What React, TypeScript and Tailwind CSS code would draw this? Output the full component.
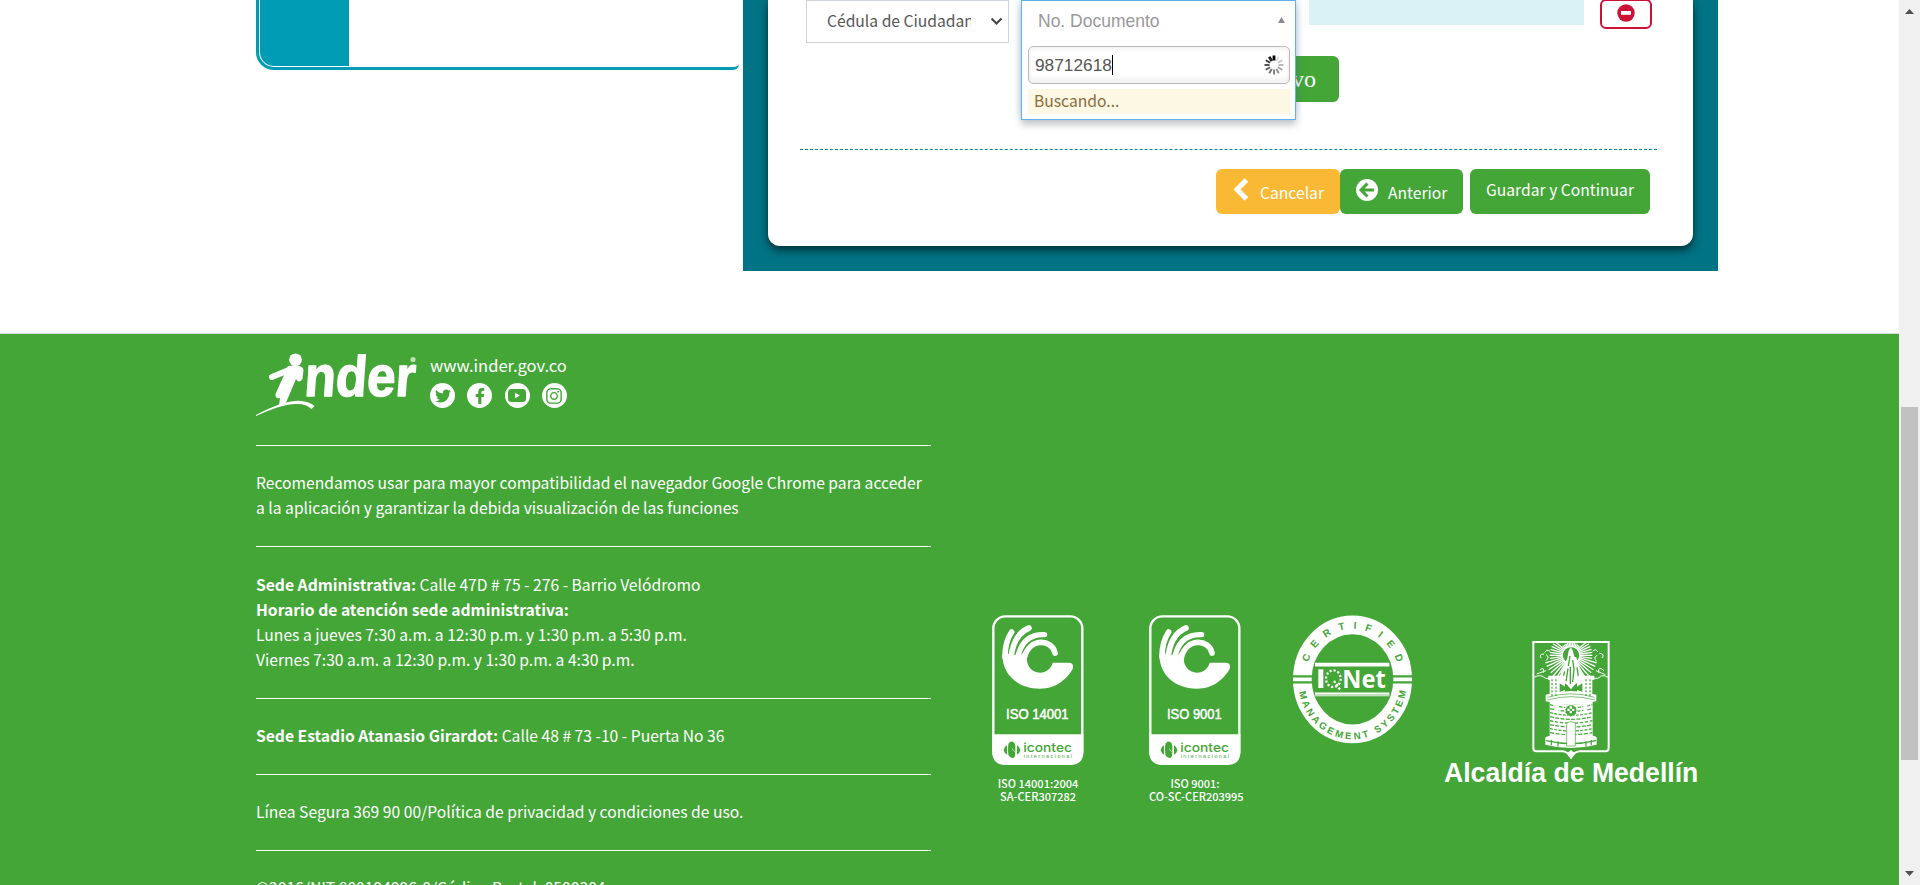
import type { ReactNode } from "react";
import { FaTwitter, FaFacebookF, FaInstagram } from "react-icons/fa";

const spokes = Array.from({ length: 12 }, (_, i) => i);
const rays = Array.from({ length: 44 }, (_, i) => i);

function Spinner() {
  return (
    <svg width="20" height="20" viewBox="-10 -10 20 20">
      {spokes.map((i) => (
        <line
          key={i}
          x1="0"
          y1="-4.500"
          x2="0"
          y2="-9.500"
          stroke="#000"
          strokeWidth={i === 0 || i === 11 ? 2.8 : 1.9}
          strokeOpacity={i === 0 ? 1 : 0.08 + (i / 12) * 0.85}
          transform={`rotate(${i * 30})`}
        />
      ))}
    </svg>
  );
}

function InderLogo() {
  return (
    <svg width="162" height="66" viewBox="0 0 162 66" fill="#fff">
      <circle cx="39.5" cy="6.8" r="6.4" />
      <path d="M16 24 L34 16.500" fill="none" stroke="#fff" strokeWidth="6" strokeLinecap="round" />
      <path d="M32 13 Q47 11 47.500 17 L46.500 26 Q43 31 40 26 L29 52 L23 53 L24 45 Q19 46 19.500 41 L28 22 Z" />
      <path d="M0 62 Q30 46 46 48 Q54 49 58.500 53 L55.500 56 Q50 51 42 51 Q28 50 0 63 Z" />
      <g transform="translate(46.5 43) skewX(-4)">
        <text
          x="1"
          y="0"
          fontFamily="Liberation Sans, sans-serif"
          fontWeight="700"
          fontSize="57"
          textLength="111"
          lengthAdjust="spacingAndGlyphs"
          stroke="#fff"
          strokeWidth="1.4"
          strokeLinejoin="round"
        >
          nder
        </text>
      </g>
      <circle cx="157" cy="6.500" r="2.600" fillOpacity="0.65" />
    </svg>
  );
}

function IcontecSeal({ label }: { label: string }) {
  return (
    <svg width="92" height="150" viewBox="0 0 276 450" fill="#fff">
      <rect x="4" y="4" width="267" height="442" rx="36" fill="none" stroke="#fff" strokeWidth="7" />
      <path d="M1 358 H274 V410 Q274 450 234 450 H41 Q1 450 1 410 Z" />
      <g fill="none" stroke="#fff" strokeLinecap="round">
        <path d="M59 51 Q39 80 39 125" strokeWidth="17" />
        <path d="M111 39 Q64 58 57 130" strokeWidth="17" />
        <path d="M158 59 Q88 56 76 135" strokeWidth="16" />
        <path d="M189 114 C180 72 112 66 96 130" strokeWidth="17" />
      </g>
      <path d="M31 118 C31 180 78 221 143 221 C195 221 226 190 242 162 Q247 144 231 143 L182 143 A39 39 0 0 1 106 125 L94 112 L78 130 L70 118 L58 130 L50 116 Z" />
      <text x="136" y="313" textAnchor="middle" fontFamily="Liberation Sans, sans-serif" fontSize="43" stroke="#fff" strokeWidth="1.500" textLength={label.length > 8 ? 188 : 164} lengthAdjust="spacingAndGlyphs">
        {label}
      </text>
      <g fill="#43a637">
        <path d="M49 386 Q55 378 63 380 Q70 385 70 392 V412 L60 400 V420 Q52 420 49 412 Z" />
        <path d="M49 391 L69 412 Q72 425 63 430 Q54 429 49 420 Z" />
        <path d="M45 391 V419 Q36 414 35 405 Q36 396 45 391Z M75 391 V419 Q84 414 85 405 Q84 396 75 391Z" />
        <text x="94" y="411" fontFamily="Inter, sans-serif" fontSize="38" fontWeight="500" textLength="146" lengthAdjust="spacingAndGlyphs">
          icontec
        </text>
        <text x="95" y="430" fontFamily="Liberation Sans, sans-serif" fontSize="16" textLength="145">
          internacional
        </text>
      </g>
    </svg>
  );
}

function IqNetSeal() {
  return (
    <svg width="119" height="129" viewBox="0 0 357 387" fill="#fff">
      <ellipse cx="178.5" cy="193" rx="150.5" ry="163.5" fill="none" stroke="#fff" strokeWidth="56" />
      <path d="M0 184 H357 M0 202 H357" stroke="#43a637" strokeWidth="7" />
      <rect x="66" y="140" width="223" height="106" fill="#43a637" />
      <path d="M66 149 H289 M66 238 H289" stroke="#fff" strokeWidth="11" />
      <path d="M66 240 H289" stroke="#43a637" strokeWidth="2" />
      <defs>
        <path id="seal-top" d="M37 193 A141.500 152 0 0 1 320 193" />
        <path id="seal-bottom" d="M16 201 A162.500 172 0 0 0 341 201" />
      </defs>
      <g fill="#43a637" fontFamily="Liberation Sans, sans-serif" fontWeight="700" fontSize="30">
        <text>
          <textPath href="#seal-top" startOffset="52" textLength="358">CERTIFIED</textPath>
        </text>
        <text fontSize="29">
          <textPath href="#seal-bottom" startOffset="30" textLength="468">MANAGEMENT SYSTEM</textPath>
        </text>
      </g>
      <rect x="76" y="163" width="15" height="56" />
      <text x="148" y="219" fontFamily="Noto Sans, sans-serif" fontWeight="700" fontSize="76" textLength="130" lengthAdjust="spacingAndGlyphs">
        Net
      </text>
      <ellipse cx="121" cy="191" rx="22" ry="25" fill="none" stroke="#fff" strokeWidth="7" strokeDasharray="6.500 5.800" />
      <path d="M123 198 L144 228" stroke="#fff" strokeWidth="7" strokeDasharray="7 5" />
    </svg>
  );
}

function MedellinLogo() {
  return (
    <svg width="256" height="146" viewBox="0 0 768 438" fill="#fff">
      <path d="M268 6 H494 V324 Q494 334 484 334 H406 Q390 336 381 351 Q372 336 356 334 H278 Q268 334 268 324 Z" fill="none" stroke="#fff" strokeWidth="6" />
      <path d="M381 330 Q385 336 396 338 L381 358 L366 338 Q377 336 381 330Z" />
      <g stroke="#fff" strokeWidth="4">
        {rays.map((i) => (
          <line
            key={i}
            x1="0"
            y1="-28"
            x2="0"
            y2={i < 6 || i > 38 ? -38 : i < 13 || i > 31 ? -64 : -80}
            transform={`translate(381 46) rotate(${(i * 360) / 44})`}
          />
        ))}
      </g>
      <circle cx="381" cy="46" r="27" fill="none" stroke="#fff" strokeWidth="5" />
      <path d="M381 22 L387 34 L391 50 L397 52 L404 76 L419 112 L408 126 L394 132 L381 148 L367 132 L352 126 L346 112 L359 78 L370 54 L374 32 Z" />
      <path d="M378 48 L373 78 M386 60 L390 88 L386 126 M372 86 L366 124 M362 94 L356 118 M399 82 L404 116 M379 80 L379 132" stroke="#43a637" strokeWidth="4" />
      <g fill="none" stroke="#fff" strokeWidth="3">
        <path d="M270 112 Q290 102 300 112 T332 104 M288 90 Q302 78 298 98 M278 102 L306 92 M291 54 Q284 42 300 42 M302 38 Q308 26 318 34 M306 62 Q318 50 306 44" />
        <path d="M492 112 Q474 102 466 112 T430 104 M480 92 Q462 76 464 98 M484 104 L456 92 M474 54 Q484 42 466 40 M462 36 Q454 24 446 34 M458 64 Q446 52 460 46" />
      </g>
      <rect x="317" y="112" width="46" height="58" />
      <rect x="399" y="112" width="46" height="58" />
      <path d="M313 107 H363 V120 H313Z M401 107 H451 V120 H401Z" />
      <path d="M347 130 L372 146 L347 156 Z M415 130 L390 146 L415 156 Z" fill="#43a637" />
      <path d="M305 164 Q381 142 457 164 V184 Q381 204 305 184 Z" />
      <path d="M310 172 Q381 151 452 172 M310 180 Q381 160 452 180" fill="none" stroke="#43a637" strokeWidth="2" />
      <path d="M317 184 Q381 204 446 184 V300 H317 Z" />
      <path d="M304 292 Q320 284 330 288 V298 H436 V288 Q448 284 458 292 V314 Q381 334 304 314 Z" />
      <g fill="none" stroke="#43a637" strokeWidth="3.600">
        <path d="M318 194 Q381 212 445 194" strokeDasharray="10 4" />
        <path d="M318 206 Q381 222 445 206" strokeDasharray="12 4" />
        <path d="M318 218 Q381 234 445 218" strokeDasharray="9 4" />
        <path d="M318 230 Q381 246 445 230" strokeDasharray="12 4" />
        <path d="M318 242 Q381 257 445 242" strokeDasharray="10 5" />
        <path d="M318 254 Q381 268 445 254" strokeDasharray="12 4" />
        <path d="M318 266 Q381 280 445 266" strokeDasharray="9 4" />
        <path d="M318 278 Q381 290 445 278" strokeDasharray="12 5" />
        <path d="M306 302 Q381 320 456 302" />
        <path d="M324 118 V168 M336 118 V168 M426 118 V168 M438 118 V168" strokeDasharray="6 5" />
        <path d="M322 300 V316 M342 304 V320 M426 304 V320 M442 300 V316" />
      </g>
      <path d="M368 318 V250 Q381 240 394 250 V318 Z" stroke="#43a637" strokeWidth="2" />
      <path d="M332 196 H344 V214 H332Z M418 196 H430 V214 H418Z" />
      <circle cx="381" cy="212" r="18" fill="#43a637" stroke="#fff" strokeWidth="4" strokeDasharray="7 3" />
      <path d="M370 206 H377 V213 H370Z M384 206 H391 V213 H384Z M377 213 H384 V220 H377Z M377 199 H384 V206 H377Z" />
      <text x="0" y="426" fontFamily="Liberation Sans, sans-serif" fontWeight="700" fontSize="83" textLength="763" lengthAdjust="spacingAndGlyphs">
        Alcaldía de Medellín
      </text>
    </svg>
  );
}

function Bubble({ children }: { children: ReactNode }) {
  return <a className="flex size-[25px] items-center justify-center rounded-full bg-white text-[#43a637]">{children}</a>;
}

function Rule() {
  return <hr className="mt-[26px] mb-[24px] border-t border-white/95" />;
}

function Registration() {
  return (
    <section className="flex h-[333px] shrink-0 items-start pl-[256px]">
      <aside className="mr-1 h-[70px] w-[483px] rounded-bl-[18px] rounded-br-[6px] border-b-[3px] border-l-[3px] border-[#009bb4] pb-px pl-px">
        <div className="h-full w-[89px] rounded-bl-[14px] bg-[#009bb4]" />
      </aside>
      <main className="h-[271px] w-[975px] bg-[#007384] px-[25px] pb-[25px]">
        <div className="h-[246px] rounded-b-[12px] bg-white pr-9 pl-8 shadow-[0_4px_8px_rgba(0,0,0,0.6)]">
          <div className="relative flex h-[150px] items-start border-b border-dashed border-[#008ba3] pl-1.5">
            <div className="flex h-[43px] w-[203px] items-center border border-[#cfd3dd] pr-[5px] pl-[20px] text-[#555]">
              <span className="-mt-px w-[144px] overflow-hidden whitespace-nowrap">Cédula de Ciudadano</span>
              <svg className="ml-auto" width="13" height="9" viewBox="0 0 13 9">
                <path d="M1.500 1.500 L6.500 6.500 L11.500 1.500" fill="none" stroke="#444" strokeWidth="2" />
              </svg>
            </div>
            <div className="relative z-10 ml-3 w-[275px] shadow-[0_-4px_8px_rgba(102,175,233,0.35)]">
              <div className="h-[120px] border border-[#66afe9] bg-white pr-[5px] pl-1.5 font-['Liberation_Sans',sans-serif] text-[17.5px] shadow-[0_5px_7px_rgba(0,0,0,0.22)]">
                <div className="flex h-[45px] items-start justify-between pr-[5px] pl-[10px] text-[#999]">
                  <span className="leading-[41px]">No. Documento</span>
                  <svg className="mt-4" width="7" height="6" viewBox="0 0 8 7">
                    <path d="M0 7 L4 0 L8 7Z" fill="#888" />
                  </svg>
                </div>
                <div className="flex h-[38px] items-center justify-between rounded-[5px] border border-[#bbb] pr-[5px] pl-1.5 text-[17.3px] text-[#555] shadow-[inset_0_2px_4px_rgba(0,0,0,0.06),inset_0_-5px_4px_rgba(0,0,0,0.05)]">
                  <span className="flex h-5 items-center border-r border-black leading-5">98712618</span>
                  <Spinner />
                </div>
                <div className="mt-[5px] h-[25px] bg-[#fcf8e3] pl-1.5 font-['Noto_Sans_CJK_JP',sans-serif] text-[15.670px] leading-[24px] text-[#8a6d3b]">Buscando...</div>
              </div>
            </div>
            <div className="ml-[13px] h-[25px] w-[275px] bg-[#daf2f6]" />
            <button className="-mt-px ml-4 flex h-[30px] w-[52px] items-center justify-center rounded-[6px] border-2 border-[#ce1237]">
              <svg className="-mt-0.5" width="18" height="18" viewBox="0 0 18 18">
                <circle cx="9" cy="9" r="8.700" fill="#ce1237" />
                <rect x="4" y="7" width="10" height="3.800" fill="#fff" />
              </svg>
            </button>
            <button className="absolute top-[56px] left-[429px] h-[46px] w-[110px] rounded-[6px] bg-[#43a637] pr-[23px] text-right font-['Liberation_Serif',serif] text-[24px] text-white">Nuevo</button>
          </div>
          <div className="mt-[19px] flex justify-end pr-[7px] text-white">
            <button className="flex h-[45px] w-[124px] items-start rounded-[6px] bg-[#f9b934] pl-[18px]">
              <svg className="mt-[9px]" width="15" height="23" viewBox="0 0 15 23">
                <path d="M12.500 2 L3 11.500 L12.500 21" fill="none" stroke="#fff" strokeWidth="5" />
              </svg>
              <span className="ml-[11px] leading-[47px]">Cancelar</span>
            </button>
            <button className="flex h-[45px] w-[123px] items-start rounded-[6px] bg-[#43a637] pl-4">
              <svg className="mt-[10px]" width="22" height="22" viewBox="0 0 22 22">
                <circle cx="11" cy="11" r="11" fill="#fff" />
                <path d="M18 11 H6 M11.500 4.500 L5 11 L11.500 17.500" fill="none" stroke="#43a637" strokeWidth="3" />
              </svg>
              <span className="ml-[10px] leading-[47px]">Anterior</span>
            </button>
            <button className="ml-[7px] flex h-[45px] w-[180px] justify-center rounded-[6px] bg-[#43a637] leading-[42px]">Guardar y Continuar</button>
          </div>
        </div>
      </main>
    </section>
  );
}

function Footer() {
  return (
    <footer className="flex flex-1 items-start overflow-hidden border-t border-[#d5d8dc] bg-[#43a637] pl-[256px] text-white">
      <div className="w-[675px] shrink-0 leading-[25px]">
        <div className="flex h-[85px] items-start pt-[19px]">
          <InderLogo />
          <div className="ml-3">
            <div className="text-[16.5px] leading-[25px]">www.inder.gov.co</div>
            <div className="mt-[5px] flex gap-[12.300px]">
              <Bubble><FaTwitter size={16} /></Bubble>
              <Bubble><FaFacebookF size={16} /></Bubble>
              <Bubble>
                <svg width="18" height="13" viewBox="0 0 18 13">
                  <rect width="18" height="13" rx="3.500" fill="#43a637" />
                  <path d="M7 3.700 L12 6.500 L7 9.300Z" fill="#fff" />
                </svg>
              </Bubble>
              <Bubble><FaInstagram size={18} /></Bubble>
            </div>
          </div>
        </div>
        <Rule />
        <p>
          Recomendamos usar para mayor compatibilidad el navegador Google Chrome para acceder
          <br />a la aplicación y garantizar la debida visualización de las funciones
        </p>
        <Rule />
        <div className="pt-px">
          <b>Sede Administrativa:</b> Calle 47D # 75 - 276 - Barrio Velódromo
          <br />
          <b>Horario de atención sede administrativa:</b>
          <br />
          Lunes a jueves 7:30 a.m. a 12:30 p.m. y 1:30 p.m. a 5:30 p.m.
          <br />
          Viernes 7:30 a.m. a 12:30 p.m. y 1:30 p.m. a 4:30 p.m.
        </div>
        <Rule />
        <p><b>Sede Estadio Atanasio Girardot:</b> Calle 48 # 73 -10 - Puerta No 36</p>
        <Rule />
        <p>Línea Segura 369 90 00/Política de privacidad y condiciones de uso.</p>
        <Rule />
        <p>©2016/NIT 800194096-0/Código Postal: 0500304</p>
      </div>
      <div className="mt-[281px] flex items-start text-center text-[11px] leading-[13px] font-medium">
        <div className="ml-[61px] w-[92px]">
          <IcontecSeal label="ISO 14001" />
          <p className="mt-3">ISO 14001:2004<br />SA-CER307282</p>
        </div>
        <div className="ml-[65px] w-[92px]">
          <IcontecSeal label="ISO 9001" />
          <p className="mt-3 whitespace-nowrap">ISO 9001:<br />CO-SC-CER203995</p>
        </div>
        <div className="ml-[52px]"><IqNetSeal /></div>
        <div className="mt-[25px] ml-[32px]"><MedellinLogo /></div>
      </div>
    </footer>
  );
}

export default function App() {
  return (
    <div className="flex h-[885px] w-[1920px] overflow-hidden bg-white font-['Noto_Sans_CJK_JP',sans-serif] text-[15.670px]">
      <div className="flex w-[1899px] flex-col">
        <Registration />
        <Footer />
      </div>
      <div className="flex flex-1 flex-col items-center justify-between bg-[#f0f0f0] py-[9px]">
        <svg width="9" height="5" viewBox="0 0 9 5"><path d="M0 5 L4.500 0 L9 5Z" fill="#505050" /></svg>
        <div className="mt-[281px] h-[353px] w-[17px] bg-[#c1c1c1]" />
        <svg width="9" height="5" viewBox="0 0 9 5"><path d="M0 0 L4.500 5 L9 0Z" fill="#505050" /></svg>
      </div>
    </div>
  );
}
